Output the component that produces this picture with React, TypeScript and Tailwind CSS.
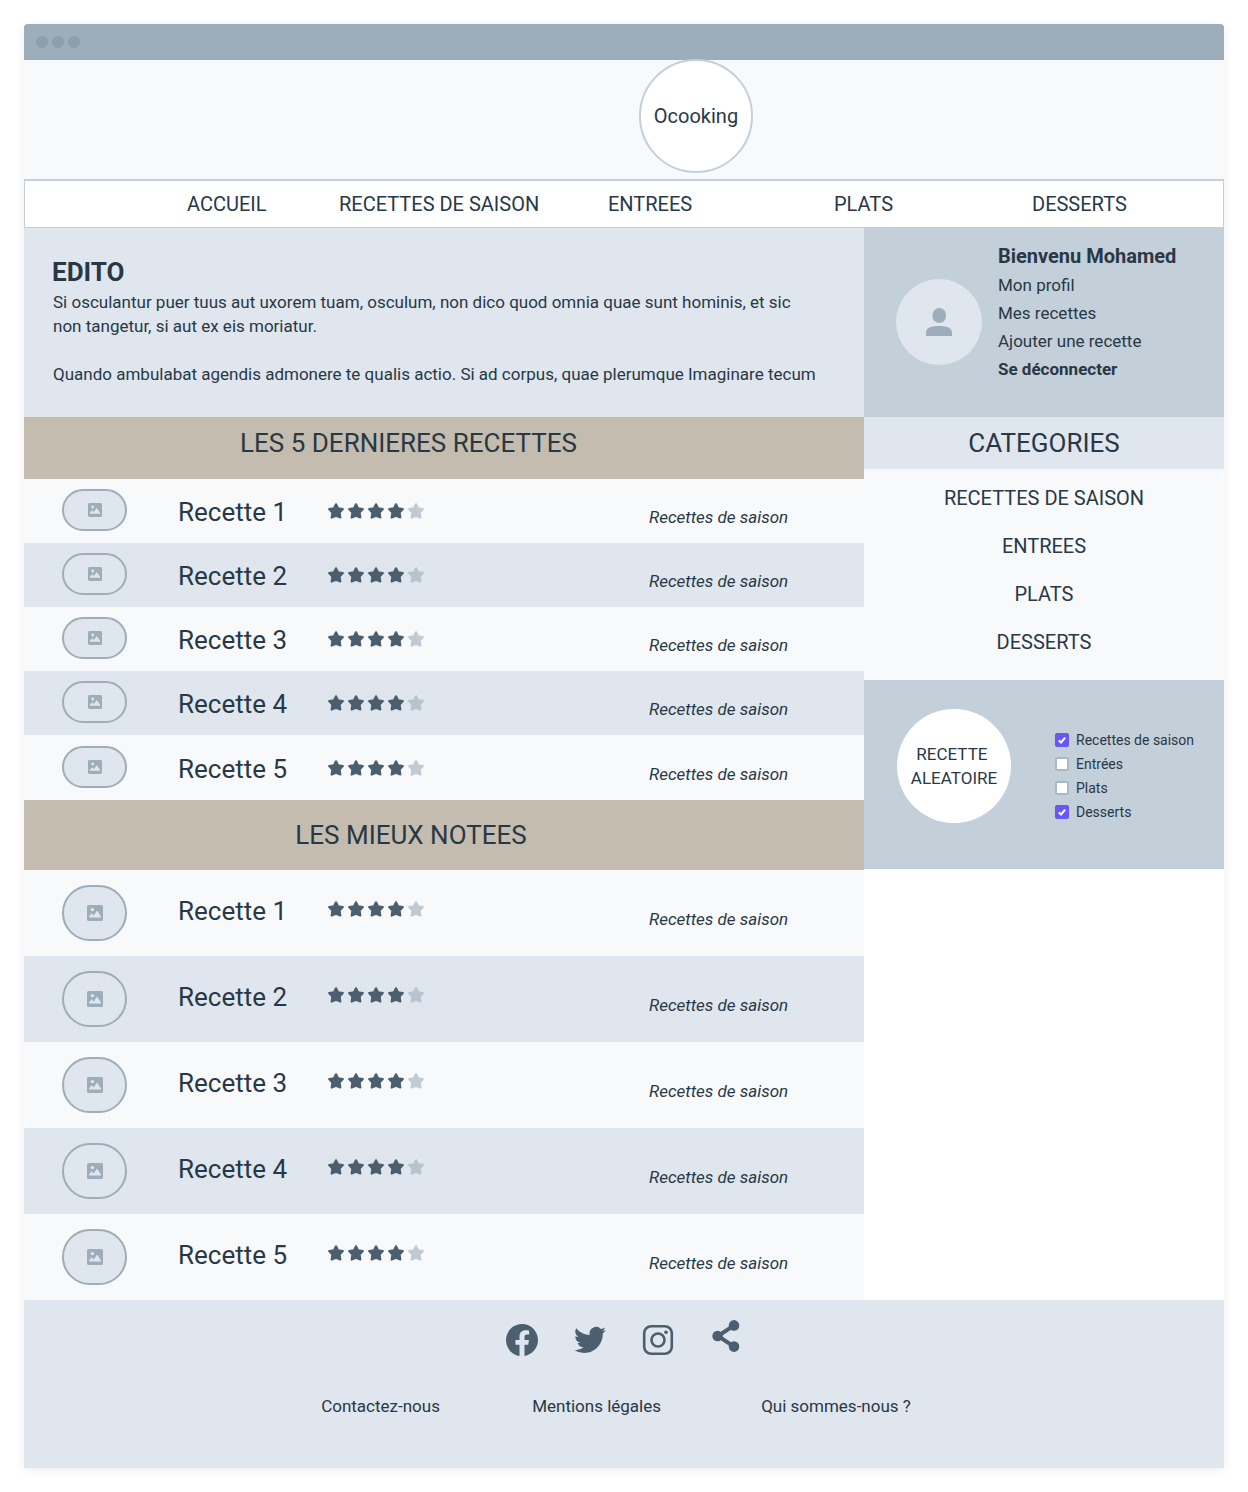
import React from "react";

const categories = ["RECETTES DE SAISON", "ENTREES", "PLATS", "DESSERTS"];
const recipes = ["Recette 1", "Recette 2", "Recette 3", "Recette 4", "Recette 5"];
const filters = [
  { id: "saison", label: "Recettes de saison", on: true },
  { id: "entrees", label: "Entrées", on: false },
  { id: "plats", label: "Plats", on: false },
  { id: "desserts", label: "Desserts", on: true },
];

function Star({ filled }: { filled: boolean }) {
  return (
    <svg viewBox="0 0 16 16" className={filled ? "size-4 text-[#4b5f6e]" : "size-4 text-[#9eadba] opacity-60"}>
      <path
        d="M8 1.3 10.1 5.4 14.8 6.1 11.6 9.6 12.3 14.5 8 12.7 3.7 14.5 4.4 9.6 1.2 6.1 5.9 5.4Z"
        fill="currentColor"
        stroke="currentColor"
        strokeWidth="2.2"
        strokeLinejoin="round"
      />
    </svg>
  );
}

function Rating({ value }: { value: number }) {
  return (
    <div role="img" aria-label={`${value} / 5`} className="flex gap-1">
      {[1, 2, 3, 4, 5].map((n) => (
        <Star key={n} filled={n <= value} />
      ))}
    </div>
  );
}

function Picture({ large }: { large: boolean }) {
  return (
    <div
      className={
        large
          ? "flex h-14 w-[65px] items-center justify-center rounded-[28px] border-2 border-[#9eadba] bg-[#dfe6ee]"
          : "mb-0.5 flex h-[42px] w-[65px] items-center justify-center rounded-[21px] border-2 border-[#9eadba] bg-[#dfe6ee]"
      }
    >
      <svg viewBox="0 0 16 16" className={large ? "size-4" : "size-[14px]"}>
        <rect width="16" height="16" rx="1.6" fill="#9eadba" />
        <circle cx="5.4" cy="4.6" r="1.7" fill="#dfe6ee" />
        <path d="M2 12.4V11.4L4.6 8.2 6.7 10.4 10 5.6 14 11.6V12.4Z" fill="#dfe6ee" />
      </svg>
    </div>
  );
}

function RecipeList({ large }: { large: boolean }) {
  return (
    <ul>
      {recipes.map((name) => (
        <li
          key={name}
          className={
            large
              ? "grid h-[86px] grid-cols-[116px_150px_321px_1fr] items-center bg-[#f8f9fb] pl-[38px] even:bg-[#dfe6ee]"
              : "grid h-16 grid-cols-[116px_150px_321px_1fr] items-center bg-[#f8f9fb] pl-[38px] last:h-[65px] even:bg-[#dfe6ee]"
          }
        >
          <Picture large={large} />
          <a href="#" className={large ? "pb-1 text-[26px] leading-8" : "pt-0.5 text-[26px] leading-8"}>
            {name}
          </a>
          <div className={large ? "pb-2" : ""}>
            <Rating value={4} />
          </div>
          <span className="pt-3 text-[17px] leading-6 italic">Recettes de saison</span>
        </li>
      ))}
    </ul>
  );
}

function Footer() {
  return (
    <footer className="h-[168px] bg-[#dfe6ee] pt-5">
      <div className="flex justify-center gap-9 text-[#4b5f6e]">
        <a href="#" aria-label="Facebook" className="pt-1">
          <svg viewBox="0 0 16 16" className="size-8" fill="currentColor">
            <path d="M16 8.049c0-4.446-3.582-8.05-8-8.05C3.58 0-.002 3.603-.002 8.05c0 4.017 2.926 7.347 6.75 7.951v-5.625h-2.03V8.05H6.75V6.275c0-2.017 1.195-3.131 3.022-3.131.876 0 1.791.157 1.791.157v1.98h-1.009c-.993 0-1.303.621-1.303 1.258v1.51h2.218l-.354 2.326H9.25V16c3.824-.604 6.75-3.934 6.75-7.951" />
          </svg>
        </a>
        <a href="#" aria-label="Twitter" className="pt-1">
          <svg viewBox="0 0 16 16" className="size-8" fill="currentColor">
            <path transform="translate(0 -.5)" d="M5.026 15c6.038 0 9.341-5.003 9.341-9.334q.002-.211-.006-.422A6.7 6.7 0 0 0 16 3.542a6.7 6.7 0 0 1-1.889.518 3.3 3.3 0 0 0 1.447-1.817 6.5 6.5 0 0 1-2.087.793A3.286 3.286 0 0 0 7.875 6.03a9.32 9.32 0 0 1-6.767-3.429 3.29 3.29 0 0 0 1.018 4.382A3.3 3.3 0 0 1 .64 6.575v.045a3.29 3.29 0 0 0 2.632 3.218 3.2 3.2 0 0 1-.865.115 3 3 0 0 1-.614-.057 3.28 3.28 0 0 0 3.067 2.277A6.6 6.6 0 0 1 .78 13.58a6 6 0 0 1-.78-.045A9.34 9.34 0 0 0 5.026 15" />
          </svg>
        </a>
        <a href="#" aria-label="Instagram" className="pt-1">
          <svg viewBox="0 0 32 32" className="size-8" fill="none" stroke="currentColor">
            <rect x="2.2" y="2.2" width="27.6" height="27.6" rx="7" strokeWidth="2.6" />
            <circle cx="16" cy="16" r="6.5" strokeWidth="2.6" />
            <circle cx="24" cy="8.2" r="1.8" fill="currentColor" stroke="none" />
          </svg>
        </a>
        <a href="#" aria-label="Partager">
          <svg viewBox="0 0 32 32" className="size-8" fill="currentColor">
            <path d="M24 5.4 8 16 24 26.6" fill="none" stroke="currentColor" strokeWidth="4" />
            <circle cx="24" cy="5.4" r="5.3" />
            <circle cx="7.6" cy="16" r="5.3" />
            <circle cx="24" cy="26.6" r="5.3" />
          </svg>
        </a>
      </div>
      <nav className="grid grid-cols-[211px_229px_auto] justify-center pt-[38px] pr-4 text-[17px] leading-6">
        <a href="#">Contactez-nous</a>
        <a href="#">Mentions légales</a>
        <a href="#">Qui sommes-nous ?</a>
      </nav>
    </footer>
  );
}

export default function App() {
  return (
    <div className="bg-white p-6 font-[Roboto,sans-serif] text-[#293845]">
      <div className="overflow-hidden rounded-t bg-white shadow-[0_2px_10px_rgba(0,0,0,0.07)]">
        <div className="flex h-9 items-center gap-1 bg-[#9eadba] px-3">
          <span className="size-3 rounded-full bg-[#8e9eae]" />
          <span className="size-3 rounded-full bg-[#8e9eae]" />
          <span className="size-3 rounded-full bg-[#8e9eae]" />
        </div>

        <header className="grid h-[119px] grid-cols-[615fr_585fr] bg-[#f8f9fb]">
          <a
            href="#"
            className="col-start-2 -mt-px flex size-[114px] items-center justify-center rounded-full border-2 border-[#c3cfd9] bg-white text-xl"
          >
            Ocooking
          </a>
        </header>

        <nav className="grid h-[49px] grid-cols-[162fr_152fr_269fr_226fr_198fr_191fr] items-center border border-t-2 border-[#c3cfd9] bg-white text-xl">
          <a href="#" className="col-start-2">ACCUEIL</a>
          {categories.map((c) => (
            <a key={c} href="#">{c}</a>
          ))}
        </nav>

        <div className="grid grid-cols-[7fr_3fr]">
          <main className="min-w-0">
            <section className="h-[189px] bg-[#dfe6ee] pt-[26px] pr-4 pl-7">
              <h1 className="text-[26px] leading-9 font-bold">EDITO</h1>
              <p className="pl-px text-[17px] leading-6">
                Si osculantur puer tuus aut uxorem tuam, osculum, non dico quod omnia quae sunt hominis, et sic
                <br />
                non tangetur, si aut ex eis moriatur.
              </p>
              <p className="pt-6 pl-px text-[17px] leading-6">
                Quando ambulabat agendis admonere te qualis actio. Si ad corpus, quae plerumque Imaginare tecum
              </p>
            </section>
            <section>
              <h2 className="h-[62px] bg-[#c4bcae] pt-2 pr-[71px] text-center text-[26px] leading-9">
                LES 5 DERNIERES RECETTES
              </h2>
              <RecipeList large={false} />
            </section>
            <section>
              <h2 className="h-[70px] bg-[#c4bcae] pr-[66px] text-center text-[26px] leading-[70px]">
                LES MIEUX NOTEES
              </h2>
              <RecipeList large />
            </section>
          </main>

          <aside className="min-w-0">
            <section className="flex h-[189px] gap-4 bg-[#c3cfd9] pl-8">
              <div className="mb-0.5 flex size-[86px] shrink-0 items-center justify-center self-center rounded-full bg-[#dfe6ee]">
                <svg viewBox="0 0 28 28" className="size-7 text-[#9eadba]" fill="currentColor">
                  <rect x="7.5" y="0" width="13.5" height="15" rx="6.75" />
                  <path d="M1 28V24.5C1 20 6 18 14 18S27 20 27 24.5V28Z" />
                </svg>
              </div>
              <div className="pt-[13px]">
                <h2 className="text-xl leading-[30px] font-bold">Bienvenu Mohamed</h2>
                <ul className="text-[17px] leading-7">
                  <li><a href="#">Mon profil</a></li>
                  <li><a href="#">Mes recettes</a></li>
                  <li><a href="#">Ajouter une recette</a></li>
                  <li><a href="#" className="font-bold">Se déconnecter</a></li>
                </ul>
              </div>
            </section>

            <section className="bg-[#f8f9fb]">
              <h2 className="h-[52px] bg-[#dfe6ee] text-center text-[26px] leading-[52px]">CATEGORIES</h2>
              <ul className="h-[211px] pt-[5px] text-center text-xl leading-[48px]">
                {categories.map((c) => (
                  <li key={c}><a href="#">{c}</a></li>
                ))}
              </ul>
            </section>

            <section className="flex h-[189px] justify-between bg-[#c3cfd9] pt-[29px] pr-[27px] pl-[33px]">
              <button type="button" className="size-[114px] shrink-0 rounded-full bg-white text-[17px] leading-6">
                RECETTE&nbsp;
                <br />
                ALEATOIRE
              </button>
              <div className="w-[142px] pt-[19px]">
                {filters.map((f) => (
                  <div key={f.id} className="flex h-6 items-center gap-[7px]">
                    <span className="relative size-[14px]">
                      <input
                        id={f.id}
                        type="checkbox"
                        defaultChecked={f.on}
                        className="peer block size-[14px] appearance-none rounded-[2px] border-2 border-[#a9b8c5] bg-white checked:border-[#6857f5] checked:bg-[#6857f5]"
                      />
                      <svg
                        viewBox="0 0 14 14"
                        className="pointer-events-none absolute inset-0 hidden size-[14px] peer-checked:block"
                        fill="none"
                        stroke="#fff"
                        strokeWidth="2"
                      >
                        <path d="M3.8 7.4 6 9.5 10.2 4.6" />
                      </svg>
                    </span>
                    <label htmlFor={f.id} className="text-sm whitespace-nowrap">{f.label}</label>
                  </div>
                ))}
              </div>
            </section>
          </aside>
        </div>

        <Footer />
      </div>
    </div>
  );
}
